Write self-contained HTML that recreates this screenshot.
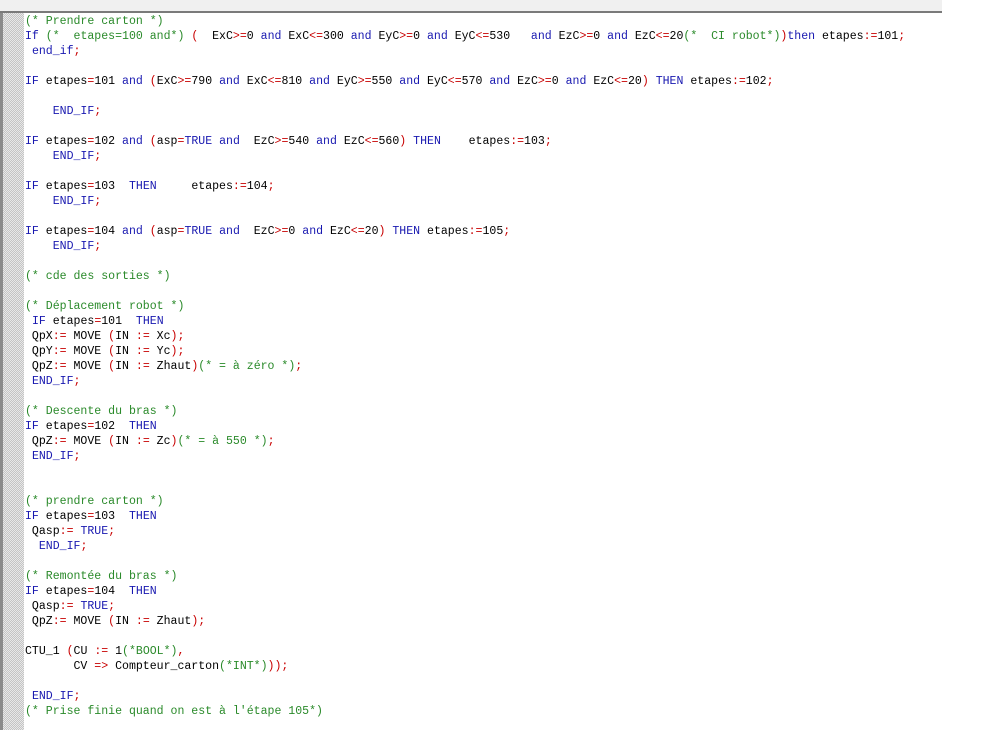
<!DOCTYPE html>
<html><head><meta charset="utf-8"><style>
html,body{margin:0;padding:0;background:#fff;width:1000px;height:730px;overflow:hidden}
#top{position:absolute;left:0;top:0;width:1000px;height:11px;background:#f0f0f0}
#topline{position:absolute;left:0;top:11px;width:942px;height:2px;background:#7a7a7a}
#topw{position:absolute;left:942px;top:0;width:58px;height:14px;background:#fff}
#lb{position:absolute;left:0;top:13px;width:3px;height:717px;background:#8a8a8a}
#gut{position:absolute;left:3px;top:13px;width:21px;height:717px;background:repeating-conic-gradient(#c4c4c4 0 25%,#e8e8e8 0 50%) 0 0/2px 2px}
pre{position:absolute;left:25px;top:13.5px;margin:0;font-family:"Liberation Mono",monospace;font-size:11.55px;line-height:15px;color:#000}
.k{color:#1818b0}.r{color:#c80000}.c{color:#2a8a2a}
</style></head><body>
<div id="top"></div><div id="topw"></div><div id="topline"></div><div id="lb"></div><div id="gut"></div>
<pre><span class="c">(* Prendre carton *)</span>
<span class="k">If</span> <span class="c">(*  etapes=100 and*)</span> <span class="r">(</span>  ExC<span class="r">&gt;=</span>0 <span class="k">and</span> ExC<span class="r">&lt;=</span>300 <span class="k">and</span> EyC<span class="r">&gt;=</span>0 <span class="k">and</span> EyC<span class="r">&lt;=</span>530   <span class="k">and</span> EzC<span class="r">&gt;=</span>0 <span class="k">and</span> EzC<span class="r">&lt;=</span>20<span class="c">(*  CI robot*)</span><span class="r">)</span><span class="k">then</span> etapes<span class="r">:=</span>101<span class="r">;</span>
 <span class="k">end_if</span><span class="r">;</span>

<span class="k">IF</span> etapes<span class="r">=</span>101 <span class="k">and</span> <span class="r">(</span>ExC<span class="r">&gt;=</span>790 <span class="k">and</span> ExC<span class="r">&lt;=</span>810 <span class="k">and</span> EyC<span class="r">&gt;=</span>550 <span class="k">and</span> EyC<span class="r">&lt;=</span>570 <span class="k">and</span> EzC<span class="r">&gt;=</span>0 <span class="k">and</span> EzC<span class="r">&lt;=</span>20<span class="r">)</span> <span class="k">THEN</span> etapes<span class="r">:=</span>102<span class="r">;</span>

    <span class="k">END_IF</span><span class="r">;</span>

<span class="k">IF</span> etapes<span class="r">=</span>102 <span class="k">and</span> <span class="r">(</span>asp<span class="r">=</span><span class="k">TRUE</span> <span class="k">and</span>  EzC<span class="r">&gt;=</span>540 <span class="k">and</span> EzC<span class="r">&lt;=</span>560<span class="r">)</span> <span class="k">THEN</span>    etapes<span class="r">:=</span>103<span class="r">;</span>
    <span class="k">END_IF</span><span class="r">;</span>

<span class="k">IF</span> etapes<span class="r">=</span>103  <span class="k">THEN</span>     etapes<span class="r">:=</span>104<span class="r">;</span>
    <span class="k">END_IF</span><span class="r">;</span>

<span class="k">IF</span> etapes<span class="r">=</span>104 <span class="k">and</span> <span class="r">(</span>asp<span class="r">=</span><span class="k">TRUE</span> <span class="k">and</span>  EzC<span class="r">&gt;=</span>0 <span class="k">and</span> EzC<span class="r">&lt;=</span>20<span class="r">)</span> <span class="k">THEN</span> etapes<span class="r">:=</span>105<span class="r">;</span>
    <span class="k">END_IF</span><span class="r">;</span>

<span class="c">(* cde des sorties *)</span>

<span class="c">(* Déplacement robot *)</span>
 <span class="k">IF</span> etapes<span class="r">=</span>101  <span class="k">THEN</span>
 QpX<span class="r">:=</span> MOVE <span class="r">(</span>IN <span class="r">:=</span> Xc<span class="r">);</span>
 QpY<span class="r">:=</span> MOVE <span class="r">(</span>IN <span class="r">:=</span> Yc<span class="r">);</span>
 QpZ<span class="r">:=</span> MOVE <span class="r">(</span>IN <span class="r">:=</span> Zhaut<span class="r">)</span><span class="c">(* = à zéro *)</span><span class="r">;</span>
 <span class="k">END_IF</span><span class="r">;</span>

<span class="c">(* Descente du bras *)</span>
<span class="k">IF</span> etapes<span class="r">=</span>102  <span class="k">THEN</span>
 QpZ<span class="r">:=</span> MOVE <span class="r">(</span>IN <span class="r">:=</span> Zc<span class="r">)</span><span class="c">(* = à 550 *)</span><span class="r">;</span>
 <span class="k">END_IF</span><span class="r">;</span>


<span class="c">(* prendre carton *)</span>
<span class="k">IF</span> etapes<span class="r">=</span>103  <span class="k">THEN</span>
 Qasp<span class="r">:=</span> <span class="k">TRUE</span><span class="r">;</span>
  <span class="k">END_IF</span><span class="r">;</span>

<span class="c">(* Remontée du bras *)</span>
<span class="k">IF</span> etapes<span class="r">=</span>104  <span class="k">THEN</span>
 Qasp<span class="r">:=</span> <span class="k">TRUE</span><span class="r">;</span>
 QpZ<span class="r">:=</span> MOVE <span class="r">(</span>IN <span class="r">:=</span> Zhaut<span class="r">);</span>

CTU_1 <span class="r">(</span>CU <span class="r">:=</span> 1<span class="c">(*BOOL*)</span><span class="r">,</span>
       CV <span class="r">=&gt;</span> Compteur_carton<span class="c">(*INT*)</span><span class="r">));</span>

 <span class="k">END_IF</span><span class="r">;</span>
<span class="c">(* Prise finie quand on est à l'étape 105*)</span>
</pre>
</body></html>
